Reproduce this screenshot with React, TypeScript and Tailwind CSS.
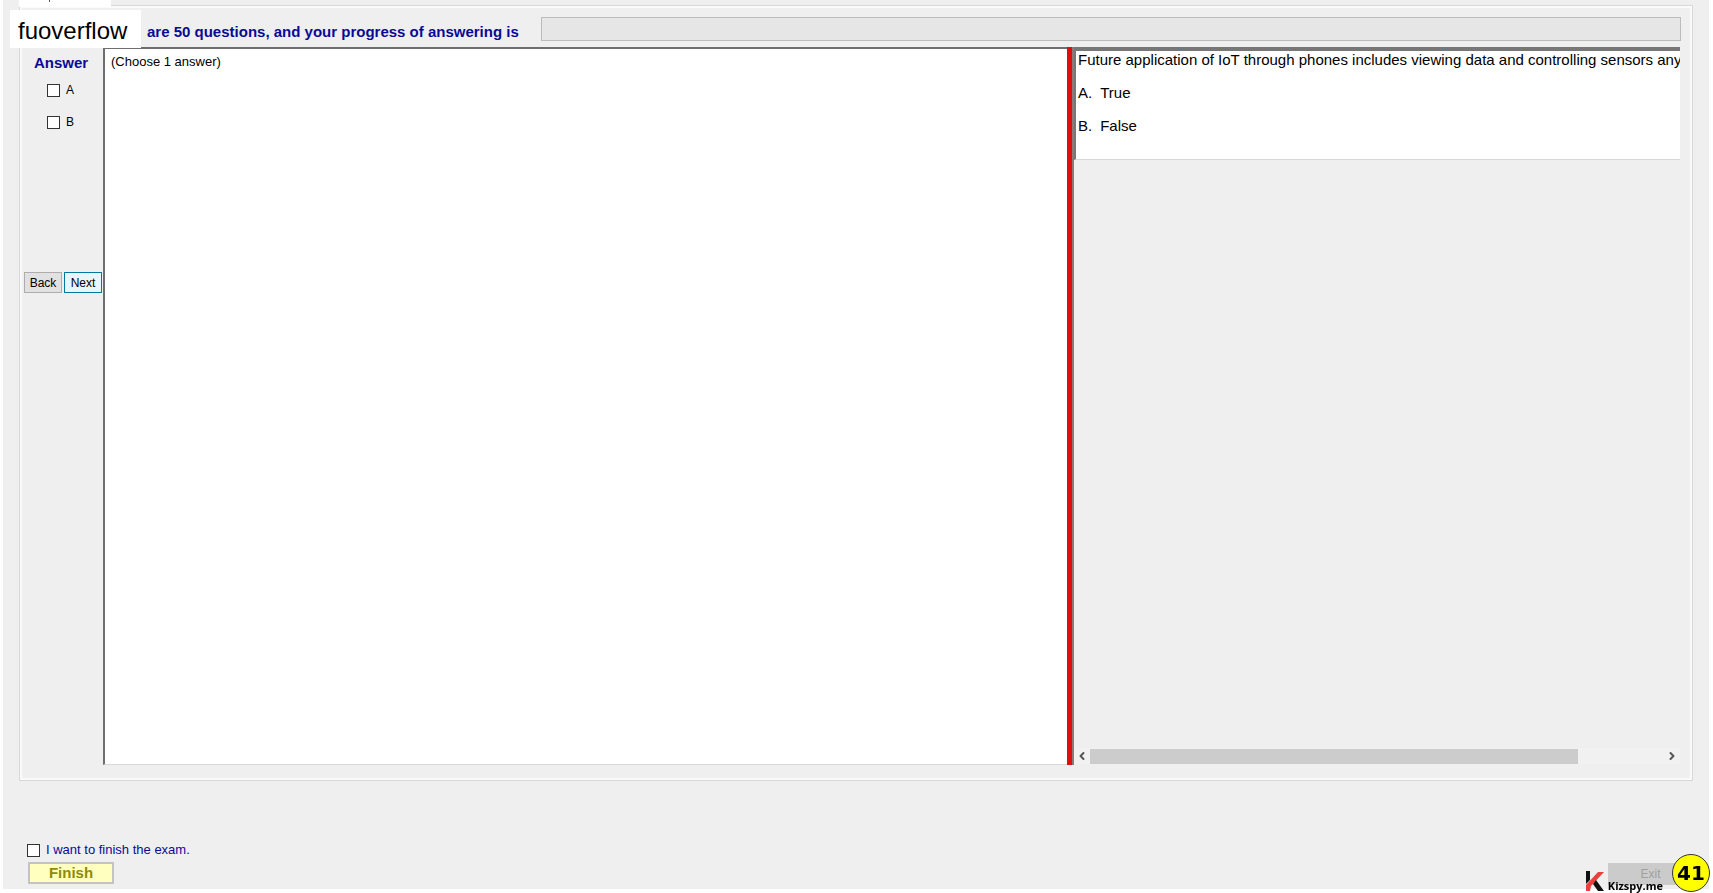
import { useState } from "react";
import { ChevronLeft, ChevronRight } from "lucide-react";

const options = [
  { key: "A", text: "True" },
  { key: "B", text: "False" },
];

const checkboxClass =
  "size-[13px] shrink-0 appearance-none border border-[#333] bg-white checked:bg-[#0078d7]";

function KizspyLogo() {
  return (
    <svg viewBox="0 0 18 20" className="mb-0.5 h-5 w-[18px]" aria-hidden="true">
      <path d="M0 0 L4 0 L4 9 L0 13 Z" fill="#111" />
      <path d="M12 1 L18 1 L5 15 L4 20 L0 20 L0 14 Z" fill="#e8403a" />
      <path d="M7 13 L10 9 L18 20 L12 20 Z" fill="#111" />
    </svg>
  );
}

export default function App() {
  const [answers, setAnswers] = useState<string[]>([]);
  const [wantFinish, setWantFinish] = useState(false);

  function toggleAnswer(key: string) {
    setAnswers((prev) =>
      prev.includes(key) ? prev.filter((k) => k !== key) : [...prev, key]
    );
  }

  return (
    <main className="flex min-h-screen flex-col bg-white pr-1 pb-1 pl-[3px] font-['Liberation_Sans',Arial,sans-serif] text-black">
      <div className="flex grow flex-col bg-[#efefef] pr-4 pl-4">
        <div className="h-[5px]">
          <div className="relative h-[7px] w-[92px] bg-white pl-[30px]">
            <div className="h-0.5 w-px bg-[#555]" />
          </div>
        </div>

        <section className="flex grow flex-col border border-[#d8d8d8] bg-[#efefef] shadow-[inset_0_0_0_2px_#fafafa]">
          <header className="flex h-[41px] items-start pt-[11px] pr-[11px]">
            <h1 className="relative -mt-[7px] -ml-[10px] flex h-[38px] w-[131px] shrink-0 items-center bg-white pt-1 pl-2 text-2xl">
              fuoverflow
            </h1>
            <p className="ml-[6px] shrink-0 pt-[5px] text-[15px] leading-5 font-bold text-[#0a0a96]">
              are 50 questions, and your progress of answering is
            </p>
            <div
              role="progressbar"
              aria-label="Progress of answering"
              aria-valuenow={0}
              className="ml-[22px] h-6 grow border border-[#bcbcbc] bg-[#e6e6e6]"
            />
          </header>

          <div className="flex grow pr-3 pb-[15px]">
            <aside className="flex w-[83px] shrink-0 flex-col pl-1">
              <h2 className="mt-1.5 pl-2.5 text-[15px] leading-5 font-bold text-[#0a0a96]">
                Answer
              </h2>
              <div className="mt-[7px] flex flex-col gap-3 pl-[23px]">
                {options.map((o) => (
                  <label
                    key={o.key}
                    className="flex h-5 items-center gap-1.5 text-xs leading-5"
                  >
                    <input
                      type="checkbox"
                      className={checkboxClass}
                      checked={answers.includes(o.key)}
                      onChange={() => toggleAnswer(o.key)}
                    />
                    {o.key}
                  </label>
                ))}
              </div>
              <div className="mt-[140px] flex gap-0.5 text-xs">
                <button className="h-[21px] w-[38px] shrink-0 border border-[#adadad] bg-[#e1e1e1]">
                  Back
                </button>
                <button className="h-[21px] w-[38px] shrink-0 border border-[#0078a0] bg-[#e5f6fc]">
                  Next
                </button>
              </div>
            </aside>

            <div className="grow border-t-2 border-b border-l-2 border-[#6e6e6e] border-b-[#d8d8d8] bg-white pt-[5px] pl-1.5 text-[13px] leading-4">
              (Choose 1 answer)
            </div>
            <div className="w-[5px] shrink-0 bg-[#dd0f0f]" />

            <div className="flex w-[608px] shrink-0 flex-col border-l-2 border-[#8a7a7a]">
              <div className="h-[113px] overflow-hidden border-t-4 border-b border-l-2 border-t-[#777] border-b-[#d8d8d8] border-l-[#777] bg-white pl-0.5 text-[15px] whitespace-nowrap">
                <p className="leading-[17px]">
                  Future application of IoT through phones includes viewing data
                  and controlling sensors anyw
                </p>
                {options.map((o) => (
                  <p key={o.key} className="mt-4 flex gap-2 leading-[17px]">
                    <span>{o.key}.</span>
                    <span>{o.text}</span>
                  </p>
                ))}
              </div>
              <div className="mt-auto mb-px flex h-4 items-center bg-[#f1f1f1]">
                <button aria-label="Scroll left" className="px-0.5">
                  <ChevronLeft size={12} strokeWidth={4} color="#555" />
                </button>
                <div className="h-[15px] grow">
                  <div className="h-full w-[85%] bg-[#cccccc]" />
                </div>
                <button aria-label="Scroll right" className="px-0.5">
                  <ChevronRight size={12} strokeWidth={4} color="#555" />
                </button>
              </div>
            </div>
          </div>
        </section>

        <footer className="mt-[61px] flex items-end justify-between pb-1 pl-2">
          <div>
            <label className="flex items-center gap-1.5 text-[13px] leading-4 text-[#0a0a96]">
              <input
                type="checkbox"
                className={checkboxClass}
                checked={wantFinish}
                onChange={() => setWantFinish(!wantFinish)}
              />
              I want to finish the exam.
            </label>
            <button className="mt-1 ml-px h-[22px] w-[86px] border-2 border-[#c3c3c3] bg-[#ffffc0] text-[15px] leading-4 font-bold text-[#8c8c0a]">
              Finish
            </button>
          </div>
          <button
            disabled
            className="h-[22px] w-[85px] bg-[#cbcbcb] text-xs text-[#a0a0a0]"
          >
            Exit
          </button>
        </footer>
      </div>

      <div className="fixed right-[50px] bottom-0 flex items-end gap-1">
        <KizspyLogo />
        <span className="font-['Open_Sans',sans-serif] text-[11px] leading-[14px] font-bold">
          Kizspy.me
        </span>
      </div>
      <div className="fixed right-[3px] bottom-px flex size-[38px] items-center justify-center rounded-full border border-[#333] bg-[#ffff00] font-['DejaVu_Sans',sans-serif] text-xl font-bold">
        41
      </div>
    </main>
  );
}
